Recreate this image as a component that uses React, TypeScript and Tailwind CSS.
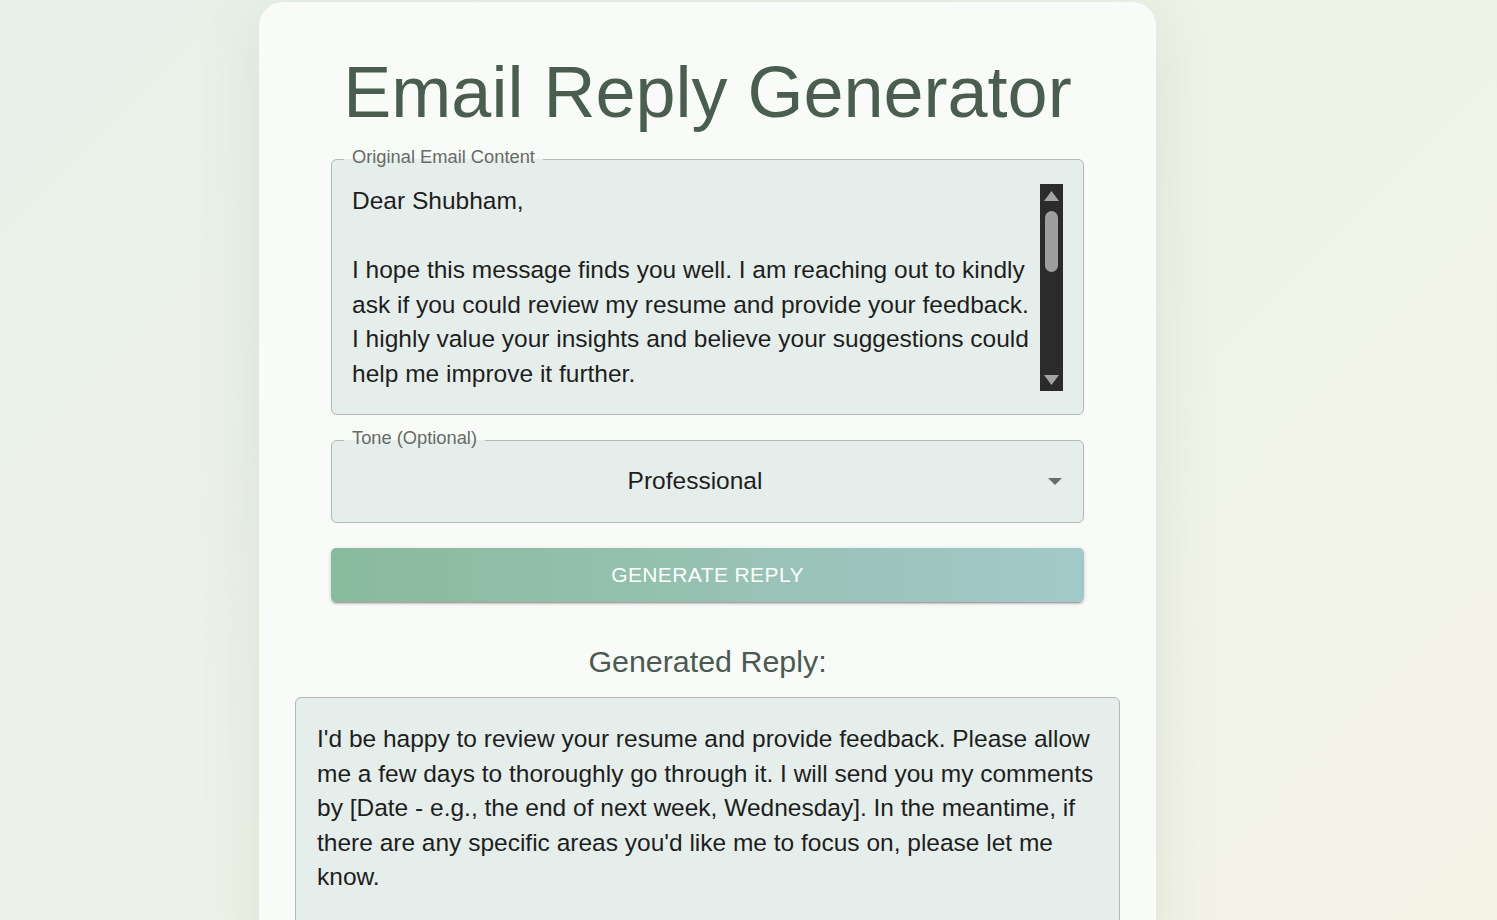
import React from "react";

const FONT = { fontFamily: '"Liberation Sans", Arial, sans-serif' };

const EMAIL_LINES = [
  "Dear Shubham,",
  "",
  "I hope this message finds you well. I am reaching out to kindly",
  "ask if you could review my resume and provide your feedback.",
  "I highly value your insights and believe your suggestions could",
  "help me improve it further.",
  "",
  "Thank you in advance for your time and support.",
  "",
  "Best regards,",
  "Aman",
];

const REPLY_LINES = [
  "I'd be happy to review your resume and provide feedback. Please allow",
  "me a few days to thoroughly go through it. I will send you my comments",
  "by [Date - e.g., the end of next week, Wednesday]. In the meantime, if",
  "there are any specific areas you'd like me to focus on, please let me",
  "know.",
  "",
  "Best regards,",
  "Shubham",
];

function Arrow({ up }: { up?: boolean }) {
  return (
    <svg width="15" height="10" viewBox="0 0 15 10">
      <path d={up ? "M7.5 0L15 10H0z" : "M0 0h15L7.5 10z"} fill="#a3a3a3" />
    </svg>
  );
}

function FakeScrollbar() {
  return (
    <div className="w-[23px] h-[207px] shrink-0 bg-[#2b2b2b] flex flex-col items-center pt-[7px] pb-[6px]">
      <Arrow up />
      <div className="mt-[10px] w-[13px] h-[61px] rounded-full bg-[#9e9e9e]" />
      <div className="flex-1" />
      <Arrow />
    </div>
  );
}

export default function App() {
  return (
    <div
      style={FONT}
      className="min-h-screen w-full overflow-hidden bg-[linear-gradient(135deg,#e8f0e9_0%,#eef2e7_50%,#f4f4e6_100%)]"
    >
      <div className="ml-[259px] mt-[2px] w-[897px] rounded-[24px] bg-[#f9fbf8] shadow-[0_10px_60px_rgba(90,120,100,0.13)] px-[36px] pt-[47px] pb-[40px]">
        <h1 className="text-center text-[72px] leading-[86px] text-[#4a5e50]">
          Email Reply Generator
        </h1>

        <div className="mx-[36px] mt-[14px]">
          {/* Original email */}
          <fieldset className="m-0 p-0 min-w-0 border border-[#b3b9b4] rounded-[6px] bg-[#e5eeea] px-[20px] pt-[15px] pb-[23px]">
            <legend className="ml-[-8px] px-[8px] text-[18.3px] leading-[20px] text-[#666b67]">
              <span className="relative top-[-2px]">Original Email Content</span>
            </legend>
            <div className="flex">
              <div className="flex-1 h-[207px] overflow-hidden text-[24.5px] leading-[34.5px] text-[#1e1e1e] whitespace-pre">
                {EMAIL_LINES.map((l, i) => (
                  <div key={i} className="h-[34.5px]">
                    {l}
                  </div>
                ))}
              </div>
              <FakeScrollbar />
            </div>
          </fieldset>

          {/* Tone */}
          <fieldset className="mt-[15px] m-0 p-0 min-w-0 border border-[#b3b9b4] rounded-[6px] bg-[#e5eeea] pb-[9px]">
            <legend className="ml-[12px] px-[8px] text-[18.3px] leading-[20px] text-[#666b67]">
              <span className="relative top-[-2px]">Tone (Optional)</span>
            </legend>
            <div className="h-[63px] flex items-center">
              <div className="flex-1 pl-[21px] pr-[11px] text-center text-[24.5px] text-[#1e1e1e]">
                Professional
              </div>
              <svg className="mr-[21px]" width="14" height="7" viewBox="0 0 14 7">
                <path d="M0 0h14L7 7z" fill="#6b6b6b" />
              </svg>
            </div>
          </fieldset>

          <button
            type="button"
            className="mt-[25px] w-full h-[54px] rounded-[5px] bg-[linear-gradient(90deg,#8aba9c,#a2c9c9)] text-white text-[21px] tracking-[0.4px] uppercase shadow-[0_3px_1px_-2px_rgba(0,0,0,0.2),0_2px_2px_0_rgba(0,0,0,0.14),0_1px_5px_0_rgba(0,0,0,0.12)]"
          >
            Generate Reply
          </button>
        </div>

        <h2 className="mt-[41px] text-center text-[30.4px] leading-[36px] text-[#4a5a50]">
          Generated Reply:
        </h2>

        <div className="mt-[18px] border border-[#b3b9b4] rounded-[6px] bg-[#e5eeea] px-[21px] pt-[24px] pb-[24px] text-[24.5px] leading-[34.5px] text-[#1e1e1e] whitespace-pre">
          {REPLY_LINES.map((l, i) => (
            <div key={i} className="h-[34.5px]">
              {l}
            </div>
          ))}
        </div>
      </div>
    </div>
  );
}
